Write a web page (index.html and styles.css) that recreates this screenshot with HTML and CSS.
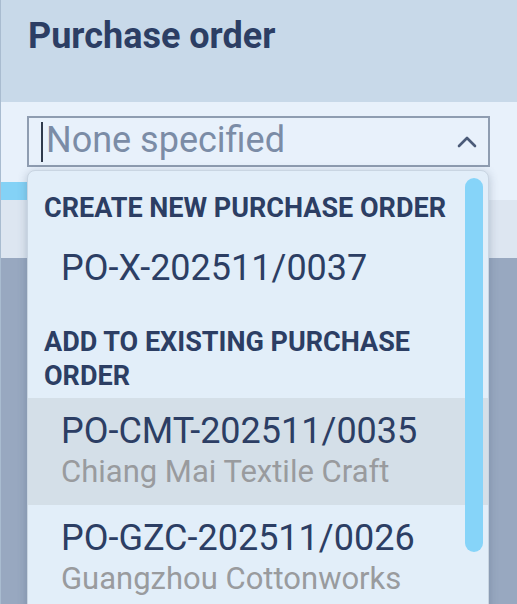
FILE: index.html
```html
<!DOCTYPE html>
<html lang="en">
<head>
    <meta charset="UTF-8">
    <meta name="viewport" content="width=device-width, initial-scale=1.0">
    <title>Purchase order</title>
    <link rel="stylesheet" href="styles.css">
</head>
<body>
    <div class="panel">
        <div class="panel-head">
            <h2 class="panel-title">Purchase order</h2>
        </div>

        <div class="panel-body">
            <div class="combo">
                <div class="combo-input">
                    <span class="text-caret"></span>
                    <span class="placeholder">None specified</span>
                    <svg class="chevron" viewBox="0 0 20 12" width="20" height="12">
                        <polyline points="2,10 10,2 18,10" fill="none" stroke="#4b5b78" stroke-width="2.6" stroke-linecap="round" stroke-linejoin="round"/>
                    </svg>
                </div>

                <!-- opened list -->
                <div class="menu">
                    <div class="menu-group first">Create new purchase order</div>
                    <div class="menu-item">
                        <div class="item-code">PO-X-202511/0037</div>
                    </div>

                    <div class="menu-group">Add to existing purchase order</div>
                    <div class="menu-item active">
                        <div class="item-code">PO-CMT-202511/0035</div>
                        <div class="item-sub">Chiang Mai Textile Craft</div>
                    </div>
                    <div class="menu-item">
                        <div class="item-code">PO-GZC-202511/0026</div>
                        <div class="item-sub">Guangzhou Cottonworks</div>
                    </div>

                    <div class="scroll-thumb"></div>
                </div>
            </div>

            <div class="tab-line"></div>
            <div class="tab-row"></div>
        </div>

        <div class="backdrop"></div>
    </div>
</body>
</html>
```

FILE: styles.css
```css
html, body {
    margin: 0;
    height: 100%;
}

body {
    font-family: Roboto, "Liberation Sans", sans-serif;
    background: #98a8c0;
    overflow: hidden;
}

.panel {
    display: flex;
    flex-direction: column;
    height: 100%;
    border-left: 1px solid #a9bcd0;
}

.panel-head {
    background: #c8d9e9;
    height: 102px;
    flex-shrink: 0;
    padding: 0 27px;
    box-sizing: border-box;
}

.panel-title {
    margin: 0;
    padding-top: 16px;
    font-size: 36px;
    font-weight: 700;
    color: #2c3e64;
    line-height: 40px;
}

.panel-body {
    background: #e8f1fb;
    flex-shrink: 0;
}

.combo {
    position: relative;
    padding: 14px 27px 15px 26px;
}

.combo-input {
    display: flex;
    align-items: center;
    height: 47px;
    border: 2px solid #8f9db1;
    background: #e8f1fb;
    padding: 0 10px 0 12px;
}

.text-caret {
    width: 2px;
    height: 40px;
    background: #2f3a4c;
    margin-right: 3px;
}

.placeholder {
    flex: 1;
    font-size: 36px;
    color: #7b8ca6;
    line-height: 40px;
    padding-bottom: 3px;
}

.chevron {
    margin-right: 1px;
}

.tab-line {
    width: 200px;
    height: 18px;
    background: #84d2f6;
}

.tab-row {
    height: 58px;
    background: #dde6f1;
}

.backdrop {
    flex: 1;
    background: #98a8c0;
}

.menu {
    position: absolute;
    top: 68px;
    left: 26px;
    width: 462px;
    height: 480px;
    background: #e2eef9;
    border: 1px solid #c9d5e2;
    border-radius: 8px;
    box-shadow: 0 2px 10px rgba(60, 80, 110, 0.3);
    padding-top: 20px;
    box-sizing: border-box;
    overflow: hidden;
}

.menu-group {
    margin: 25px 0 5px;
    padding: 0 40px 0 16px;
    font-size: 27px;
    font-weight: 700;
    text-transform: uppercase;
    color: #2c3e64;
    line-height: 34px;
}

.menu-group.first {
    margin: 0 0 10px;
}

.menu-item {
    padding: 13px 40px 12px 33px;
}

.menu-item.active {
    background: #d4dfe8;
}

.item-code {
    font-size: 36px;
    color: #2c3e64;
    line-height: 40px;
}

.item-sub {
    font-size: 31px;
    color: #999b9e;
    line-height: 42px;
}

.scroll-thumb {
    position: absolute;
    top: 7px;
    right: 5px;
    width: 18px;
    height: 374px;
    border-radius: 9px;
    background: #86d4f9;
}
```
